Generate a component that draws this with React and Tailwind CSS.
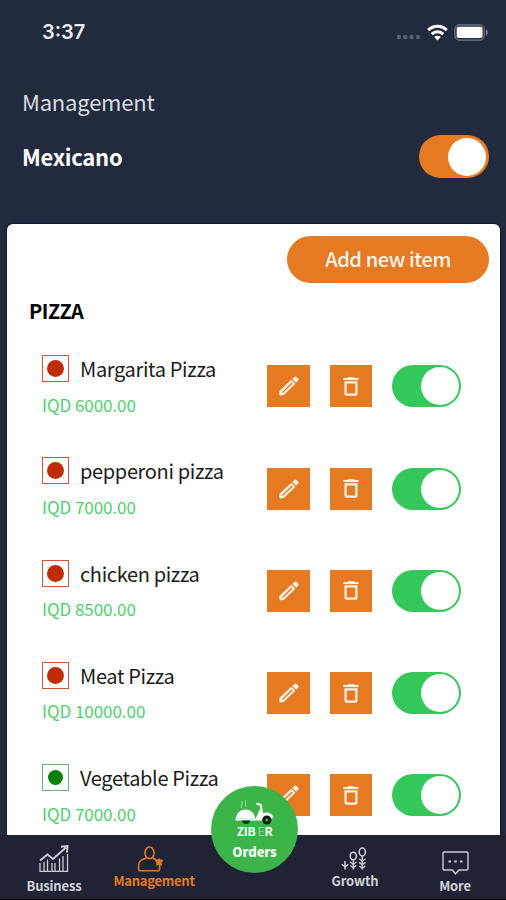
const items = [
  { name: 'Margarita Pizza', price: 'IQD 6000.00' },
  { name: 'pepperoni pizza', price: 'IQD 7000.00' },
  { name: 'chicken pizza', price: 'IQD 8500.00' },
  { name: 'Meat Pizza', price: 'IQD 10000.00' },
  { name: 'Vegetable Pizza', price: 'IQD 7000.00', veg: true },
]

function StatusBar() {
  return (
    <div className="flex h-16 items-center justify-between pl-[42px] pr-[18px]">
      <span className="font-['Inter'] text-[20px] font-semibold leading-6 text-[#e9ebef]">3:37</span>
      <div className="flex items-center">
        <svg className="mt-[10px] h-[6px] w-[25px]" viewBox="0 0 25 6" fill="#566072">
          <circle cx="3" cy="3" r="2.2" />
          <circle cx="9.3" cy="3" r="2.2" />
          <circle cx="15.6" cy="3" r="2.2" />
          <circle cx="22" cy="3" r="2.2" />
        </svg>
        <svg className="ml-[6px] h-[17px] w-[21px]" viewBox="0 0 21 17" fill="none" stroke="#fff" strokeWidth="3.1">
          <path d="M1.2 6.2C6.4 0.9 14.6 0.9 19.8 6.2" />
          <path d="M4.8 10.1C8 7 13 7 16.2 10.1" />
          <path d="M10.5 16.4L7.2 13C9.1 11.2 11.9 11.2 13.8 13Z" fill="#fff" stroke="none" />
        </svg>
        <svg className="ml-[6px] h-[17px] w-[34px]" viewBox="0 0 34 17">
          <rect x="0.9" y="0.9" width="29.4" height="15.2" rx="4.5" fill="none" stroke="#5d6575" strokeWidth="1.6" />
          <rect x="2.7" y="2.7" width="25.8" height="11.4" rx="1.8" fill="#fff" />
          <path d="M32 5.5C34.4 6.5 34.4 10.5 32 11.5Z" fill="#7b8290" />
        </svg>
      </div>
    </div>
  )
}

function OrangeToggle() {
  return (
    <div className="flex h-[43px] w-[70px] items-center justify-end rounded-full bg-[#e67a22] pr-[3px]">
      <div className="h-[38px] w-[38px] rounded-full bg-white" />
    </div>
  )
}

function GreenToggle() {
  return (
    <div className="flex h-[42px] w-[69px] items-center justify-end rounded-full bg-[#34c759] pr-[2px]">
      <div className="h-[38px] w-[38px] rounded-full bg-white" />
    </div>
  )
}

function FoodMark({ veg }) {
  return (
    <div className={`flex h-[27px] w-[27px] items-center justify-center border ${veg ? 'border-[#6fb57a]' : 'border-[#cf5535]'}`}>
      <div className={`rounded-full ${veg ? 'h-[15px] w-[15px] bg-[#0a8008]' : 'h-[17px] w-[17px] bg-[#c02c06]'}`} />
    </div>
  )
}

function PencilIcon() {
  return (
    <svg className="h-5 w-5" viewBox="0 0 20 20" fill="#fff1e4">
      <path d="M0.5 14.8L12.4 3.7L16.4 7.7L4.8 18.9L1.6 19.5Q0.3 19.6 0.4 18.3ZM2.9 16.2L3.8 17L13.6 7.7L12.5 6.6Z" fillRule="evenodd" />
      <path d="M13.3 2.9L15.8 0.7Q16.7 0.1 17.5 0.9L19.4 2.8Q20 3.7 19.3 4.5L17.2 6.8Z" />
    </svg>
  )
}

function TrashIcon() {
  return (
    <svg className="h-[19px] w-4" viewBox="0 0 16 19" fill="none" stroke="#fff1e4">
      <path d="M0.5 2H15.5" strokeWidth="2.2" />
      <path d="M5 0.8H11" strokeWidth="1.4" />
      <path d="M2.6 5.4H13.4V16.4Q13.4 17.6 12.2 17.6H3.8Q2.6 17.6 2.6 16.4Z" strokeWidth="2.2" />
    </svg>
  )
}

function ItemRow({ item }) {
  return (
    <div className="flex h-[102.25px] shrink-0 items-start pl-[35px]">
      <div className="w-[225px] pt-[20px]">
        <div className="flex items-center gap-[11px]">
          <FoodMark veg={item.veg} />
          <span className="whitespace-nowrap text-[20px] leading-[27px] tracking-[-0.35px] text-[#1c1c1c]">{item.name}</span>
        </div>
        <p className="mt-[12.5px] whitespace-nowrap text-[17px] leading-5 tracking-[-0.05px] text-[#4fcf70]">{item.price}</p>
      </div>
      <div className="flex items-center pt-[30.3px]">
        <button className="flex h-[42px] w-[43px] items-center justify-center bg-[#e67a22]">
          <PencilIcon />
        </button>
        <button className="ml-5 flex h-[42px] w-[42px] items-center justify-center bg-[#e67a22]">
          <TrashIcon />
        </button>
        <div className="ml-5">
          <GreenToggle />
        </div>
      </div>
    </div>
  )
}

function BusinessIcon() {
  return (
    <svg className="h-7 w-[30px]" viewBox="0 0 30 28" fill="none" stroke="#c9ccd3" strokeWidth="1.3">
      <path d="M1 18V26.3H28.5V9" />
      <path d="M1 15.5L8.5 9.5L14 14L27 2.5M22 1.8L28.6 1L28 7.5" strokeWidth="1.9" />
      <path d="M5 17V26M8.5 14.5V26M13 18V26M16 18V26M20.5 13.5V26M24 11V26" />
    </svg>
  )
}

function ManagementIcon() {
  return (
    <svg className="h-[26px] w-[27px]" viewBox="0 0 27 26" fill="none" stroke="#e67a22" strokeWidth="1.6">
      <ellipse cx="12.5" cy="6.8" rx="4.6" ry="5.8" />
      <path d="M9.2 12.2C4 13.8 1.6 15 1.6 19.5V23.6Q1.6 24.8 2.8 24.8H21.4Q22.6 24.8 22.6 23.6V19" />
      <path d="M15.8 12.2L19 13.6" />
      <path d="M22.2 12.2L23.4 13.6L26.6 14L24.6 16.4L25 20L22.2 18.8L19.2 20L19.5 16.8L17.2 13.8L20.8 13.6Z" fill="#e67a22" stroke="none" />
    </svg>
  )
}

function GrowthIcon() {
  return (
    <svg className="h-6 w-[26px]" viewBox="0 0 26 24" fill="none" stroke="#c9ccd3" strokeWidth="1.6">
      <ellipse cx="12.3" cy="9" rx="3.1" ry="3.8" />
      <ellipse cx="21.3" cy="5" rx="3.1" ry="4" />
      <path d="M12.3 13V22.5M21.3 9V22.5M4 14V22.5" />
      <path d="M0.7 17.2L4 19.8L7.3 17.2M9 15L12.3 17.2L15.6 15M9.3 18.6L12.3 20.8L15.3 18.6M18 11.8L21.3 14L24.6 11.8M18 15.4L21.3 17.6L24.6 15.4M18.3 19L21.3 21.2L24.3 19" strokeWidth="1.3" />
    </svg>
  )
}

function MoreIcon() {
  return (
    <svg className="h-6 w-[27px]" viewBox="0 0 27 24" fill="none" stroke="#c9ccd3" strokeWidth="1.4">
      <path d="M2.2 1H24.8Q26 1 26 2.2V17.8Q26 19 24.8 19H17L13.5 22.8L10.5 19H2.2Q1 19 1 17.8V2.2Q1 1 2.2 1Z" />
      <path d="M6.5 10.5H9M12.2 10.5H14.8M18 10.5H20.5" strokeWidth="2.2" />
    </svg>
  )
}

function OrdersButton() {
  return (
    <button className="absolute left-[211px] top-[786px] flex h-[87px] w-[87px] flex-col items-center rounded-full bg-[#3bb54a] pt-[14px] text-white">
      <svg className="h-[26px] w-10" viewBox="0 0 40 26">
        <path d="M1 18.5C2 6.5 19 6.5 20 18.5Z" fill="#fff" />
        <path d="M0.5 19.5H28L25.8 5L21.5 3.5" fill="none" stroke="#fff" strokeWidth="2" />
        <path d="M25 9L28 15L30 20H20Z" fill="#fff" />
        <path d="M26 15C30 11 37 12 38.5 18L26 20.5Z" fill="#fff" />
        <path d="M6.5 8C5 5 8 4 7 1M11 7C9 4 12 2 10 0" fill="none" stroke="#a5e0ac" strokeWidth="0.9" />
        <path d="M7 20.5A4 3.4 0 0 0 15 20.5Z" fill="#12351a" />
        <circle cx="31.8" cy="20" r="4.6" fill="#0c1f10" />
        <circle cx="31.8" cy="20" r="1.5" fill="#3bb54a" />
      </svg>
      <span className="-mt-[2px] flex text-[12px] font-bold leading-[13px] tracking-[-0.2px]">
        ZIB<span className="ml-[2px] font-normal text-[#8ad694]">E</span>R
      </span>
      <span className="mt-[7px] text-[13px] font-black leading-4 tracking-[-0.1px]">Orders</span>
    </button>
  )
}

function BottomNav() {
  return (
    <nav className="flex h-[65px] border-b border-black bg-[#1f2333] pl-1 text-[13px] font-bold leading-4 tracking-[-0.15px] text-[#d0d2d9]">
      <div className="flex w-[100px] flex-col items-center pt-[10px]">
        <BusinessIcon />
        <span className="mt-[5px]">Business</span>
      </div>
      <div className="flex w-[100px] flex-col items-center pt-[11px] text-[#e67a22]">
        <div className="pr-2">
          <ManagementIcon />
        </div>
        <span className="mt-[1px] tracking-[-0.25px]">Management</span>
      </div>
      <div className="w-[100px]" />
      <div className="flex w-[102px] flex-col items-center pt-[12px]">
        <div className="pr-[3px]">
          <GrowthIcon />
        </div>
        <span className="mt-[2px]">Growth</span>
      </div>
      <div className="flex w-[98px] flex-col items-center pt-[16px]">
        <MoreIcon />
        <span className="mt-[3px]">More</span>
      </div>
    </nav>
  )
}

export default function App() {
  return (
    <div className="relative flex h-[900px] w-[506px] flex-col overflow-hidden bg-[#222b3d] font-['Noto_Sans_CJK_SC',sans-serif]">
      <StatusBar />
      <header className="h-40 pl-[22px] pr-[17px]">
        <h1 className="pt-[22px] text-[22px] leading-[30px] tracking-[-0.2px] text-[#d9dce2]">Management</h1>
        <div className="mt-[19px] flex items-center justify-between">
          <h2 className="pb-[1px] text-[22px] font-bold leading-[30px] tracking-[-0.25px] text-white">Mexicano</h2>
          <OrangeToggle />
        </div>
      </header>
      <main className="mx-[7px] mr-[6px] flex h-[611px] flex-col overflow-hidden rounded-t-[6px] bg-white pt-3 shadow-[0_0_2px_1px_#10163a]">
        <button className="mr-[11px] h-[47px] w-[202px] shrink-0 self-end rounded-full bg-[#e67a22] pb-[2px] text-[20px] font-medium leading-[45px] tracking-[-0.4px] text-[#fff4ea]">
          Add new item
        </button>
        <h3 className="mt-4 shrink-0 pl-[22px] text-[20px] font-bold leading-6 tracking-[-0.5px] text-black">PIZZA</h3>
        <div className="mt-3">
          {items.map((item) => (
            <ItemRow key={item.name} item={item} />
          ))}
        </div>
      </main>
      <BottomNav />
      <OrdersButton />
    </div>
  )
}
